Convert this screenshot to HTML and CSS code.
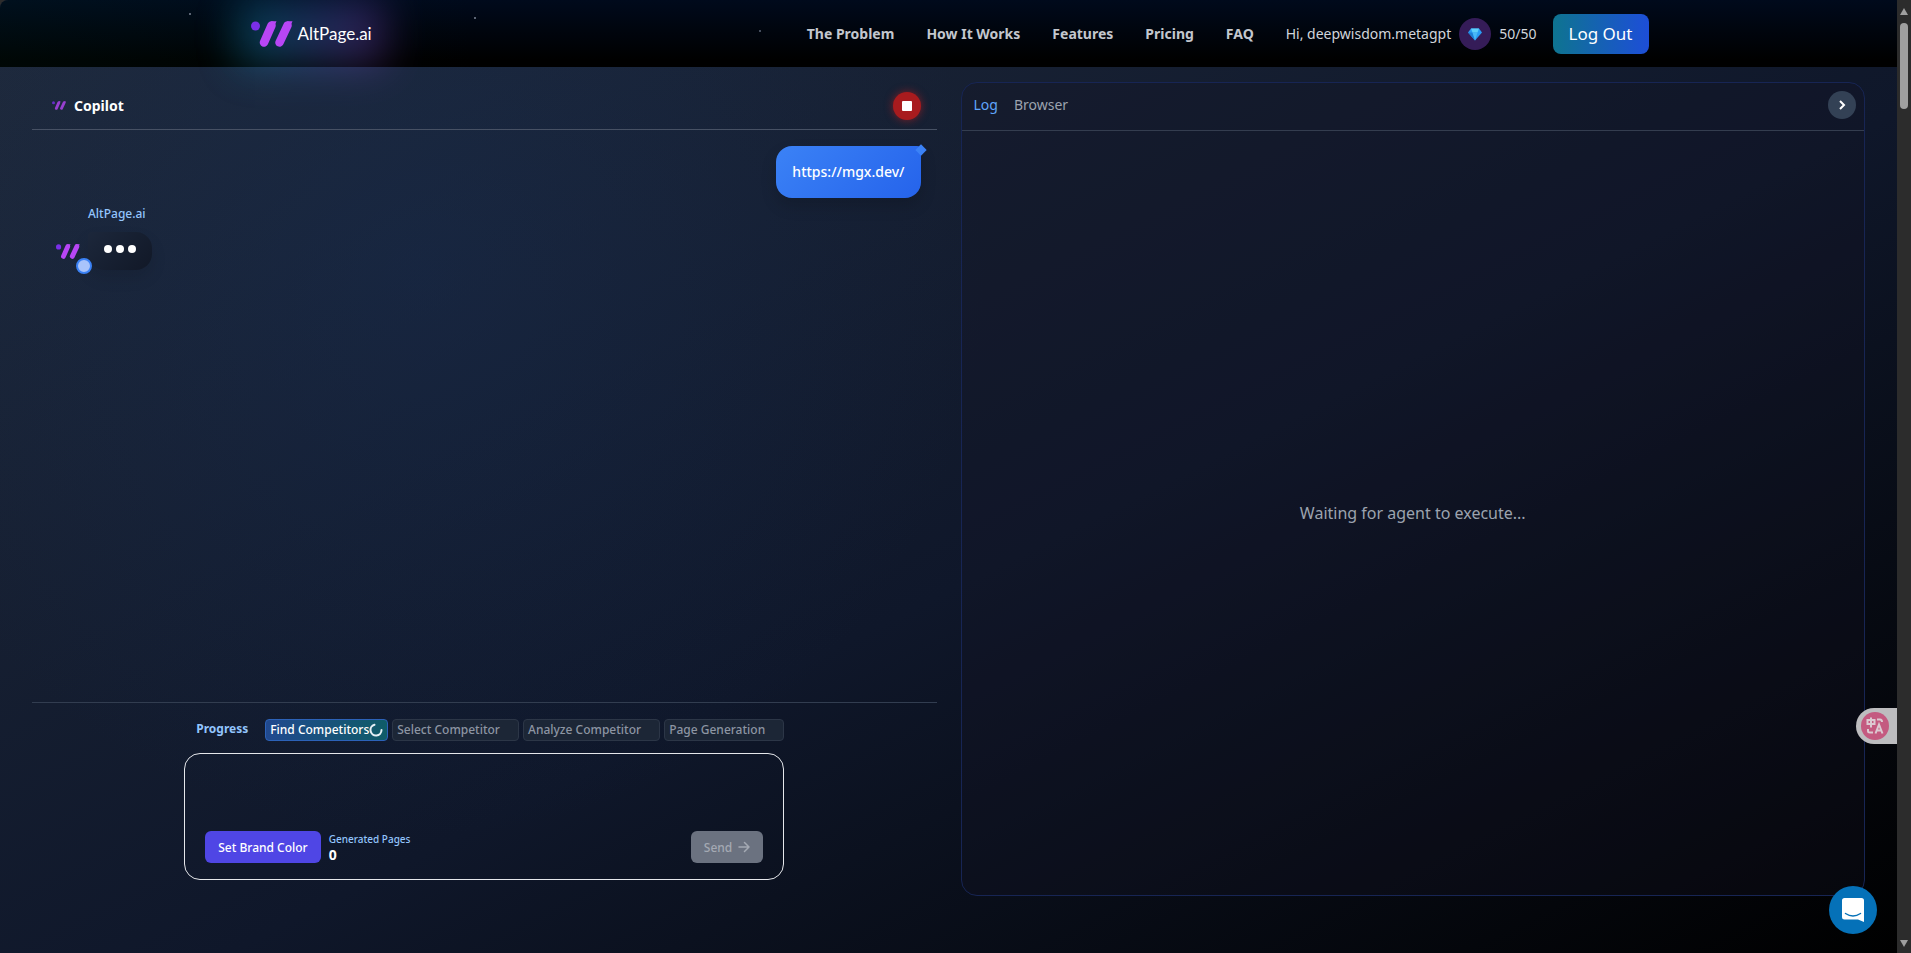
FILE: index.html
```html
<!DOCTYPE html>
<html lang="en">
<head>
    <meta charset="UTF-8">
    <title>AltPage.ai</title>
    <link rel="stylesheet" href="styles.css">
</head>
<body>
    <svg class="defs" width="0" height="0" aria-hidden="true">
        <symbol id="logo" viewBox="0 0 42 26">
            <circle cx="4.5" cy="5" r="4.5" fill="#7a2fe8"/>
            <path d="M13 21.500L20.500 4.500M28.500 21.500L36.500 4.500" stroke="#b846f5" stroke-width="8.500" stroke-linecap="round"/>
            <path d="M20 0.300H25.500L23 6ZM36 0.300H41.500L39 6Z" fill="#b846f5"/>
        </symbol>
    </svg>

    <div class="page">
        <header class="site-header">
            <div class="header-inner">
                <a class="brand" href="#">
                    <svg class="brand-logo"><use href="#logo"/></svg>
                    <span>AltPage.ai</span>
                </a>
                <nav class="nav">
                    <a href="#problem">The Problem</a>
                    <a href="#how">How It Works</a>
                    <a href="#features">Features</a>
                    <a href="#pricing">Pricing</a>
                    <a href="#faq">FAQ</a>
                    <div class="user">
                        <span>Hi, deepwisdom.metagpt</span>
                        <span class="gem">
                            <svg width="14" height="14" viewBox="0 0 14 14">
                                <path d="M3 1.500H11L14 5.500L7 13.500L0 5.500Z" fill="#2a9df4"/>
                                <path d="M3 1.500H11L9.500 5.500H4.500Z" fill="#5fd0fa"/>
                                <path d="M0 5.500H4.500L7 13.500Z" fill="#1c7fd6"/>
                                <path d="M4.500 5.500H9.500L7 13.500Z" fill="#49b8f8"/>
                            </svg>
                        </span>
                        <span>50/50</span>
                    </div>
                    <button class="logout" type="button">Log Out</button>
                </nav>
            </div>
        </header>

        <main class="workspace">
            <section class="copilot">
                <div class="copilot-head">
                    <svg class="head-logo"><use href="#logo"/></svg>
                    <h2>Copilot</h2>
                    <button class="stop" type="button" aria-label="Stop"><span></span></button>
                </div>

                <div class="chat">
                    <div class="bubble-user">https://mgx.dev/</div>
                    <div class="reply">
                        <div class="reply-name">AltPage.ai</div>
                        <div class="reply-row">
                            <div class="avatar">
                                <svg class="avatar-logo"><use href="#logo"/></svg>
                                <span class="status"></span>
                            </div>
                            <div class="typing"><i></i><i></i><i></i></div>
                        </div>
                    </div>
                </div>

                <div class="composer">
                    <div class="progress">
                        <span class="progress-title">Progress</span>
                        <div class="step active">Find Competitors
                            <svg width="14" height="14" viewBox="0 0 14 14" fill="none">
                                <path d="M12.500 7A5.500 5.500 0 1 1 5.500 1.700" stroke="#e5f0f5" stroke-width="2" stroke-linecap="round"/>
                            </svg>
                        </div>
                        <div class="step">Select Competitor</div>
                        <div class="step">Analyze Competitor</div>
                        <div class="step">Page Generation</div>
                    </div>
                    <div class="input-box">
                        <textarea class="prompt" aria-label="Message"></textarea>
                        <div class="input-actions">
                            <button class="brand-color" type="button">Set Brand Color</button>
                            <div class="generated">
                                <span>Generated Pages</span>
                                <strong>0</strong>
                            </div>
                            <button class="send" type="button" disabled>Send
                                <svg width="12" height="12" viewBox="0 0 12 12" fill="none" stroke="currentColor" stroke-width="1.500" stroke-linecap="round" stroke-linejoin="round"><path d="M1 6H11M6.500 1.500L11 6L6.500 10.500"/></svg>
                            </button>
                        </div>
                    </div>
                </div>
            </section>

            <section class="viewer">
                <div class="viewer-head">
                    <button class="tab selected" type="button">Log</button>
                    <button class="tab" type="button">Browser</button>
                    <button class="collapse" type="button" aria-label="Collapse">
                        <svg width="12" height="12" viewBox="0 0 12 12" fill="none" stroke="#fff" stroke-width="2"><path d="M4 2L8 6L4 10"/></svg>
                    </button>
                </div>
                <div class="viewer-body">Waiting for agent to execute...</div>
            </section>
        </main>

        <button class="translate" type="button" aria-label="Translate">
            <svg width="28" height="28" viewBox="0 0 28 28" fill="none">
                <circle cx="14" cy="14" r="14" fill="#c45a80"/>
                <g stroke="#dcc9d1" stroke-width="2">
                    <path d="M6.500 8H13.500V12H6.500ZM10 5.500V15.500"/>
                    <path d="M16 7.500H19Q21 7.500 21 10M7 17V19Q7 20.500 9 20.500H12"/>
                    <path d="M14.500 21.500L18 12.500L21.500 21.500M15.500 18.500H20.500"/>
                </g>
            </svg>
        </button>
        <button class="messenger" type="button" aria-label="Open chat">
            <svg width="22" height="24" viewBox="0 0 22 24">
                <path d="M2.500 0H19.500Q22 0 22 2.500V24L16 21.500H2.500Q0 21.500 0 19V2.500Q0 0 2.500 0Z" fill="#fff"/>
                <path d="M3.500 15.500Q11 20.500 18.500 15.500" fill="none" stroke="#0571b8" stroke-width="1.500" stroke-linecap="round"/>
            </svg>
        </button>
    </div>

    <div class="scrollbar" aria-hidden="true">
        <span class="arrow up"></span>
        <span class="thumb"></span>
        <span class="arrow down"></span>
    </div>
</body>
</html>
```
FILE: styles.css
```css
* { box-sizing: border-box; }
body {
    margin: 0;
    display: flex;
    height: 100vh;
    overflow: hidden;
    background: #2c2c2c;
    color: #fff;
    font-family: "Noto Sans", "Open Sans", sans-serif;
    font-size: 14px;
}
button { font: inherit; color: inherit; border: none; padding: 0; cursor: pointer; }
a { color: inherit; text-decoration: none; }
.defs { position: absolute; }

.page {
    position: relative;
    flex: 1;
    display: flex;
    flex-direction: column;
    border-top-left-radius: 8px;
    overflow: hidden;
    background:
        radial-gradient(circle at 22% 28%, rgba(22, 48, 92, 0.3), transparent 35%),
        linear-gradient(to bottom right, #1f2a3c 0%, #0f172a 56%, #000 100%);
}

/* header */
.site-header {
    position: relative;
    z-index: 1;
    height: 67px;
    background:
        radial-gradient(circle at 190px 14px, #5c6574 1px, transparent 1px),
        radial-gradient(circle at 475px 18px, #5c6574 1px, transparent 1px),
        radial-gradient(circle at 760px 31px, #454d5c 1px, transparent 1px),
        linear-gradient(90deg, rgba(0, 50, 40, 0.15), transparent 25%),
        linear-gradient(#000a1c, #000 90%);
}
.header-inner {
    max-width: 1400px;
    height: 100%;
    margin: 0 auto;
    display: flex;
    align-items: center;
    justify-content: space-between;
}
.brand {
    position: relative;
    display: flex;
    align-items: center;
    gap: 5px;
    padding-left: 2px;
    font-family: Lato, sans-serif;
    font-size: 17px;
}
.brand::before {
    content: "";
    position: absolute;
    inset: -20px -12px;
    z-index: -1;
    background: linear-gradient(90deg, #0891b2, #4f5fc5 60%, #7e3fb8);
    opacity: 0.4;
    filter: blur(20px);
}
.brand-logo { width: 42px; height: 26px; }
.nav {
    display: flex;
    align-items: center;
    gap: 32px;
    color: #d1d5db;
}
.nav > a { font-weight: 700; color: #c3c7ce; }
.user { display: flex; align-items: center; gap: 8px; }
.gem {
    display: grid;
    place-items: center;
    width: 32px;
    height: 32px;
    border-radius: 50%;
    background: #351c58;
}
.logout {
    height: 40px;
    padding: 0 16px;
    margin-left: -16px;
    border-radius: 8px;
    background: linear-gradient(90deg, #0e7490, #1d4ed8);
    color: #fff;
    font-size: 17px;
}

/* main area */
.workspace {
    flex: 1;
    min-height: 0;
    display: grid;
    grid-template-columns: 1fr 1fr;
    gap: 24px;
    padding: 15px 32px 57px;
}
.copilot, .viewer { display: flex; flex-direction: column; min-width: 0; }
.copilot-head {
    display: flex;
    align-items: center;
    height: 48px;
    padding: 0 16px 0 20px;
    border-bottom: 1px solid #475164;
}
.head-logo { width: 14px; height: 9px; opacity: 0.8; }
.copilot-head h2 { margin: 0 0 0 8px; font-size: 14px; font-weight: 700; }
.stop {
    display: grid;
    place-items: center;
    width: 28px;
    height: 28px;
    margin-left: auto;
    border-radius: 50%;
    background: #a81b1e;
    box-shadow: 0 0 8px rgba(200, 30, 30, 0.6);
}
.stop span { width: 10px; height: 10px; border-radius: 1px; background: #fff; }

.chat {
    flex: 1;
    display: flex;
    flex-direction: column;
    padding: 16px 16px 16px 24px;
}
.bubble-user {
    position: relative;
    align-self: flex-end;
    padding: 16px;
    line-height: 20px;
    border-radius: 16px 4px 16px 16px;
    background: linear-gradient(135deg, #3b82f6, #2563eb);
    box-shadow: 0 8px 16px rgba(0, 0, 0, 0.15);
    font-weight: 500;
}
.bubble-user::after {
    content: "";
    position: absolute;
    top: 0;
    right: -4px;
    width: 8px;
    height: 8px;
    background: #3b82f6;
    transform: rotate(45deg);
}
.reply-name {
    margin: 6px 0 8px 32px;
    line-height: 20px;
    font-size: 12px;
    font-weight: 500;
    color: #93c5fd;
}
.reply-row { display: flex; }
.avatar { position: relative; display: flex; width: 32px; align-items: center; }
.avatar-logo { width: 24px; height: 15px; }
.status {
    position: absolute;
    right: -4px;
    bottom: -4px;
    width: 16px;
    height: 16px;
    border: 2px solid #3b82f6;
    border-radius: 50%;
    background: #a9c4fb;
}
.typing {
    display: flex;
    align-items: center;
    gap: 4px;
    height: 38px;
    padding: 0 16px 4px;
    border-radius: 4px 16px 16px 16px;
    background: linear-gradient(135deg, #1c273b, #111827);
    box-shadow: 0 8px 16px rgba(0, 0, 0, 0.1);
}
.typing i { width: 8px; height: 8px; border-radius: 50%; background: #fff; }

.composer { border-top: 1px solid #323d50; padding: 16px 0; }
.progress, .input-box { width: 600px; max-width: 100%; margin: 0 auto; }
.progress {
    display: flex;
    gap: 4px;
    padding-left: 12px;
    margin-bottom: 12px;
    line-height: 20px;
    font-size: 12px;
    font-weight: 500;
}
.progress-title { width: 65px; color: #93c5fd; font-weight: 700; }
.step {
    flex: 1 1 auto;
    display: flex;
    align-items: center;
    white-space: nowrap;
    padding: 0 4px;
    border: 1px solid #2c3647;
    border-radius: 4px;
    background: #1c2636;
    color: #8d95a3;
}
.step.active {
    flex-grow: 0;
    border-color: #2c62b8;
    background: linear-gradient(90deg, #21498f, #0f5c68);
    color: #fff;
}
.input-box {
    display: flex;
    flex-direction: column;
    height: 127px;
    padding: 12px 20px 16px;
    border: 1px solid #e5e7eb;
    border-radius: 16px;
}
.prompt {
    flex: 1;
    min-height: 0;
    padding: 0;
    border: none;
    outline: none;
    resize: none;
    background: transparent;
    color: #fff;
    font: inherit;
}
.input-actions { display: flex; align-items: center; gap: 8px; font-size: 12px; font-weight: 500; }
.brand-color, .send { height: 32px; padding: 0 13px; border-radius: 6px; }
.brand-color { background: #4f46e5; }
.send {
    display: flex;
    align-items: center;
    gap: 6px;
    margin-left: auto;
    background: #6b7280;
    color: #a4a9b3;
}
.generated { display: flex; flex-direction: column; line-height: 16px; }
.generated span { font-size: 10px; color: #93c5fd; }
.generated strong { font-size: 14px; }

/* right panel */
.viewer {
    border: 1px solid #172554;
    border-radius: 16px;
    background: rgba(20, 20, 38, 0.3);
}
.viewer-head {
    display: flex;
    align-items: center;
    gap: 16px;
    height: 48px;
    padding: 0 8px 4px 12px;
    border-bottom: 1px solid #343d4f;
}
.tab { background: none; color: #9ca3af; }
.tab.selected { color: #60a5fa; }
.collapse {
    display: grid;
    place-items: center;
    width: 28px;
    height: 28px;
    margin-left: auto;
    border-radius: 50%;
    background: #334155;
}
.viewer-body {
    flex: 1;
    display: grid;
    place-items: center;
    color: #9ca3af;
    font-size: 16px;
}

/* floating widgets */
.translate {
    position: absolute;
    right: 0;
    bottom: 209px;
    display: flex;
    align-items: center;
    width: 41px;
    height: 36px;
    padding-left: 5px;
    border-radius: 18px 0 0 18px;
    background: #bdbdbf;
}
.messenger {
    position: absolute;
    right: 20px;
    bottom: 19px;
    display: grid;
    place-items: center;
    width: 48px;
    height: 48px;
    border-radius: 50%;
    background: #0571b8;
}

.scrollbar {
    display: flex;
    flex-direction: column;
    align-items: center;
    width: 14px;
    padding: 8px 0 6px;
    background: #2c2c2c;
}
.thumb { width: 8px; height: 86px; margin-top: 8px; border-radius: 4px; background: #9f9f9f; }
.arrow { border: 4px solid transparent; }
.up { border-top: none; border-bottom: 7px solid #9f9f9f; }
.down { margin-top: auto; border-bottom: none; border-top: 7px solid #9f9f9f; }
```
